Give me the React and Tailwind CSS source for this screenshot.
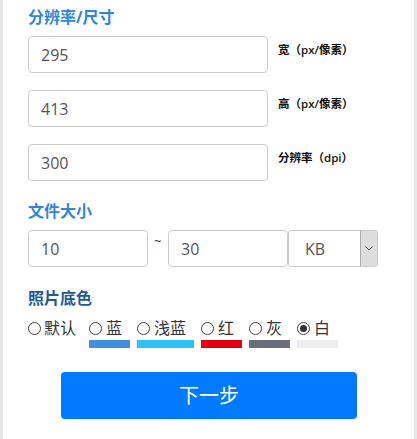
import React from "react";

const font = { fontFamily: '"Open Sans", "Noto Sans CJK SC", sans-serif' };

function Radio({ checked }) {
  return (
    <span className="flex h-[13px] w-[13px] shrink-0 items-center justify-center rounded-full border border-[#444]">
      {checked && <span className="h-[7px] w-[7px] rounded-full bg-[#333]" />}
    </span>
  );
}

function Field({ value, label }) {
  return (
    <div className="flex items-start">
      <div className="flex h-[37px] w-[240px] items-center rounded-[4px] border border-[#ccc] pl-[12px] text-[16px] text-[#555]">
        {value}
      </div>
      <div className="pl-[10px] pt-[7px] text-[11.5px] font-semibold leading-[14px] text-[#111]">{label}</div>
    </div>
  );
}

const colors = [
  { name: "蓝", bar: "bg-[#438edb]", w: "w-[41px]" },
  { name: "浅蓝", bar: "bg-[#2cc2f7]", w: "w-[57px]" },
  { name: "红", bar: "bg-[#e50012]", w: "w-[41px]" },
  { name: "灰", bar: "bg-[#696f7e]", w: "w-[41px]" },
  { name: "白", bar: "bg-[#eeeeee]", w: "w-[41px]", checked: true },
];

export default function App() {
  return (
    <div className="flex h-[439px] w-[417px] bg-[#e6e6e6] px-[3px]" style={font}>
      <div className="flex-1 bg-white pl-[25px]">
        <div className="pt-[5px] text-[16px] font-bold leading-6 text-[#3086d6]">分辨率/尺寸</div>
        <div className="mt-[7px] flex flex-col gap-[17px]">
          <Field value="295" label="宽（px/像素）" />
          <Field value="413" label="高（px/像素）" />
          <Field value="300" label="分辨率（dpi）" />
        </div>

        <div className="mt-[18px] text-[16px] font-bold leading-6 text-[#3086d6]">文件大小</div>
        <div className="mt-[7px] flex items-start">
          <div className="flex h-[37px] w-[120px] items-center rounded-[4px] border border-[#ccc] pl-[12px] text-[16px] text-[#555]">
            10
          </div>
          <div className="w-[20px] pl-[6px] pt-[4px] text-[13px] leading-[14px] text-[#333]">~</div>
          <div className="flex h-[37px] w-[120px] items-center rounded-[4px] border border-[#ccc] pl-[12px] text-[16px] text-[#555]">
            30
          </div>
          <div className="flex h-[37px] w-[90px] items-stretch rounded-[3px] border border-[#ccc]">
            <div className="flex flex-1 items-center pl-[16px] text-[16px] text-[#555]">KB</div>
            <div className="flex w-[17px] items-center justify-center rounded-r-[2px] border-l border-[#aaa] bg-[#dddddd]">
              <svg width="8" height="5" viewBox="0 0 8 5">
                <path d="M0.5 0.5 L4 4 L7.5 0.5" fill="none" stroke="#555" strokeWidth="1" />
              </svg>
            </div>
          </div>
        </div>

        <div className="mt-[19px] text-[16px] font-bold leading-6 text-[#1e5a96]">照片底色</div>
        <div className="mt-[6px] flex items-start">
          <div className="flex h-[24px] items-center gap-[3px] text-[16px] text-[#333]">
            <Radio />
            <span>默认</span>
          </div>
          <div className="ml-[13px] flex gap-[7px]">
            {colors.map((c) => (
              <div key={c.name} className={`flex flex-col ${c.w}`}>
                <div className="flex h-[24px] items-center gap-[4px] text-[16px] text-[#333]">
                  <Radio checked={c.checked} />
                  <span>{c.name}</span>
                </div>
                <div className={`h-[8px] w-full ${c.bar}`} />
              </div>
            ))}
          </div>
        </div>

        <div className="ml-[33px] mt-[24px] flex h-[47px] w-[296px] items-center justify-center rounded-[4px] bg-[#007bff] text-[20px] text-white">
          下一步
        </div>
      </div>
    </div>
  );
}
